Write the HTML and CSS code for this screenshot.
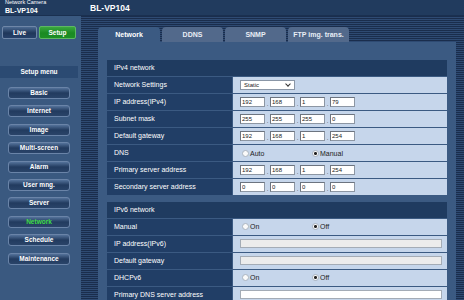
FILE: index.html
```html
<!DOCTYPE html>
<html lang="en">
<head>
    <meta charset="UTF-8">
    <meta name="viewport" content="width=device-width, initial-scale=1.0">
    <title>BL-VP104 Network Setup</title>
    <link rel="stylesheet" href="styles.css">
</head>
<body>
    <div class="header">
        <div class="brand">
            <div class="brand-small">Network Camera</div>
            <div class="brand-model">BL-VP104</div>
        </div>
        <div class="title">BL-VP104</div>
    </div>

    <div class="main">
        <div class="sidebar">
            <div class="mode">
                <button class="mode-btn">Live</button>
                <button class="mode-btn active">Setup</button>
            </div>
            <div class="menu-title">Setup menu</div>
            <div class="menu">
                <button class="menu-btn">Basic</button>
                <button class="menu-btn">Internet</button>
                <button class="menu-btn">Image</button>
                <button class="menu-btn">Multi-screen</button>
                <button class="menu-btn">Alarm</button>
                <button class="menu-btn">User mng.</button>
                <button class="menu-btn">Server</button>
                <button class="menu-btn current">Network</button>
                <button class="menu-btn">Schedule</button>
                <button class="menu-btn">Maintenance</button>
            </div>
        </div>

        <div class="content">
            <div class="tabs">
                <div class="tab active">Network</div>
                <div class="tab">DDNS</div>
                <div class="tab">SNMP</div>
                <div class="tab">FTP img. trans.</div>
            </div>

            <div class="panel">
                <div class="section-title">IPv4 network</div>
                <div class="row">
                    <div class="label">Network Settings</div>
                    <div class="value">
                        <div class="select">Static<span class="chevron"></span></div>
                    </div>
                </div>
                <div class="row">
                    <div class="label">IP address(IPv4)</div>
                    <div class="value ip">
                        <input type="text" value="192"><span class="dot">.</span><input type="text" value="168"><span class="dot">.</span><input type="text" value="1"><span class="dot">.</span><input type="text" value="79">
                    </div>
                </div>
                <div class="row">
                    <div class="label">Subnet mask</div>
                    <div class="value ip">
                        <input type="text" value="255"><span class="dot">.</span><input type="text" value="255"><span class="dot">.</span><input type="text" value="255"><span class="dot">.</span><input type="text" value="0">
                    </div>
                </div>
                <div class="row">
                    <div class="label">Default gateway</div>
                    <div class="value ip">
                        <input type="text" value="192"><span class="dot">.</span><input type="text" value="168"><span class="dot">.</span><input type="text" value="1"><span class="dot">.</span><input type="text" value="254">
                    </div>
                </div>
                <div class="row">
                    <div class="label">DNS</div>
                    <div class="value">
                        <span class="radio">Auto</span>
                        <span class="radio checked">Manual</span>
                    </div>
                </div>
                <div class="row">
                    <div class="label">Primary server address</div>
                    <div class="value ip">
                        <input type="text" value="192"><span class="dot">.</span><input type="text" value="168"><span class="dot">.</span><input type="text" value="1"><span class="dot">.</span><input type="text" value="254">
                    </div>
                </div>
                <div class="row">
                    <div class="label">Secondary server address</div>
                    <div class="value ip">
                        <input type="text" value="0"><span class="dot">.</span><input type="text" value="0"><span class="dot">.</span><input type="text" value="0"><span class="dot">.</span><input type="text" value="0">
                    </div>
                </div>

                <div class="section-title second">IPv6 network</div>
                <div class="row">
                    <div class="label">Manual</div>
                    <div class="value">
                        <span class="radio">On</span>
                        <span class="radio checked">Off</span>
                    </div>
                </div>
                <div class="row">
                    <div class="label">IP address(IPv6)</div>
                    <div class="value"><input type="text" class="wide" disabled></div>
                </div>
                <div class="row">
                    <div class="label">Default gateway</div>
                    <div class="value"><input type="text" class="wide" disabled></div>
                </div>
                <div class="row">
                    <div class="label">DHCPv6</div>
                    <div class="value">
                        <span class="radio">On</span>
                        <span class="radio checked">Off</span>
                    </div>
                </div>
                <div class="row">
                    <div class="label">Primary DNS server address</div>
                    <div class="value"><input type="text" class="wide"></div>
                </div>
            </div>
        </div>
    </div>
</body>
</html>
```

FILE: styles.css
```css
html, body {
    margin: 0;
    height: 100%;
    overflow: hidden;
}
body {
    font-family: "Liberation Sans", Arial, sans-serif;
    color: #fff;
    background: repeating-linear-gradient(to bottom, #1a2d4c 0, #1a2d4c 1px, #2e4a72 1px, #2e4a72 2px);
}
.header {
    height: 16px;
    display: flex;
    align-items: center;
    background: #213b5e;
    border-bottom: 1px solid #1a3050;
    box-sizing: border-box;
}
.brand {
    width: 86px;
    padding-left: 5px;
    box-sizing: border-box;
    line-height: 1;
}
.brand-small {
    font-size: 5.5px;
    margin-top: -1px;
}
.brand-model {
    font-size: 7px;
    font-weight: bold;
    margin-top: 1px;
}
.title {
    font-size: 8.5px;
    font-weight: bold;
    padding-left: 4px;
}
.main {
    display: flex;
    height: calc(100% - 16px);
}
.sidebar {
    width: 81px;
    background: #3a5980;
    padding-top: 10px;
    box-sizing: border-box;
}
.mode {
    display: flex;
    gap: 2px;
    padding-left: 2px;
}
.mode-btn {
    width: 35px;
    height: 13px;
    padding: 0;
    border: 1px solid #6f87a8;
    border-radius: 2px;
    background: linear-gradient(#4c6a92, #1f375a 55%, #27416a);
    color: #fff;
    font-family: inherit;
    font-size: 6.5px;
    font-weight: bold;
}
.mode-btn.active {
    width: 37px;
    background: linear-gradient(#3aa73f, #1a8a22 55%, #1d8f26);
    border-color: #5db862;
}
.menu-title {
    width: 78px;
    height: 12px;
    margin-top: 27px;
    background: #2b4a72;
    font-size: 6.5px;
    font-weight: bold;
    text-align: center;
    line-height: 12px;
}
.menu {
    display: flex;
    flex-direction: column;
    gap: 6.4px;
    padding: 9px 0 0 8px;
}
.menu-btn {
    width: 62px;
    height: 12px;
    padding: 0;
    border: 1px solid #6a84a8;
    border-radius: 3px;
    background: linear-gradient(#54729a, #223b5f 50%, #2a4469);
    color: #fff;
    font-family: inherit;
    font-size: 6.5px;
    font-weight: bold;
    line-height: 10px;
}
.menu-btn.current {
    color: #3fdc46;
}
.content {
    width: 358px;
    margin-left: 17px;
    display: flex;
    flex-direction: column;
}
.tabs {
    display: flex;
    gap: 2px;
    margin-top: 11px;
    height: 15px;
}
.tab {
    width: 61px;
    background: #52698b;
    border-radius: 4px 4px 0 0;
    font-size: 7px;
    font-weight: bold;
    text-align: center;
    line-height: 15px;
    color: #e8eef6;
}
.tab.active {
    width: 62px;
    background: #3b5a82;
    color: #fff;
}
.panel {
    flex: 1;
    min-height: 0;
    overflow: hidden;
    background: #3b5a82;
    padding: 18px 9px 0;
}
.section-title {
    height: 16px;
    line-height: 16px;
    background: #1f3b60;
    font-size: 7px;
    padding-left: 7px;
    margin-bottom: 1px;
}
.section-title.second {
    margin-top: 6.5px;
}
.row {
    display: flex;
    height: 16px;
    margin-bottom: 1px;
}
.label {
    width: 125px;
    background: #213e66;
    font-size: 7px;
    line-height: 16px;
    padding-left: 7px;
    box-sizing: border-box;
}
.value {
    flex: 1;
    margin-left: 1px;
    background: #c6d6eb;
    display: flex;
    align-items: center;
    padding-left: 7px;
    color: #222;
    font-size: 7px;
}
.select {
    width: 55px;
    height: 10px;
    box-sizing: border-box;
    background: #fff;
    border: 1px solid #8a96a6;
    font-size: 6px;
    line-height: 8px;
    padding-left: 3px;
    position: relative;
}
.chevron {
    position: absolute;
    right: 4px;
    top: 1px;
    width: 3px;
    height: 3px;
    border-right: 1px solid #333;
    border-bottom: 1px solid #333;
    transform: rotate(45deg);
}
.ip input, .wide {
    height: 10px;
    box-sizing: border-box;
    border: 1px solid #8c96a3;
    border-top-color: #6c7480;
    border-left-color: #6c7480;
    border-radius: 0;
    background: #fff;
    padding: 0 1px;
    font-family: inherit;
    font-size: 6px;
    color: #222;
    outline: none;
}
.ip input {
    width: 25px;
}
.dot {
    width: 5px;
    text-align: center;
    font-size: 6px;
    padding-top: 3px;
}
.wide {
    width: 202px;
    height: 9px;
    border-color: #a4acb6;
}
.wide:disabled {
    background: #ececec;
}
.radio {
    width: 70px;
    display: flex;
    align-items: center;
    gap: 1px;
    margin-left: 2px;
    margin-right: -2px;
}
.radio::before {
    content: "";
    width: 5px;
    height: 5px;
    border-radius: 50%;
    border: 0.5px solid #aab4c0;
    background: #fafafa;
}
.radio.checked::before {
    background: radial-gradient(circle, #222 0, #222 1.3px, #fafafa 1.6px);
}
```
